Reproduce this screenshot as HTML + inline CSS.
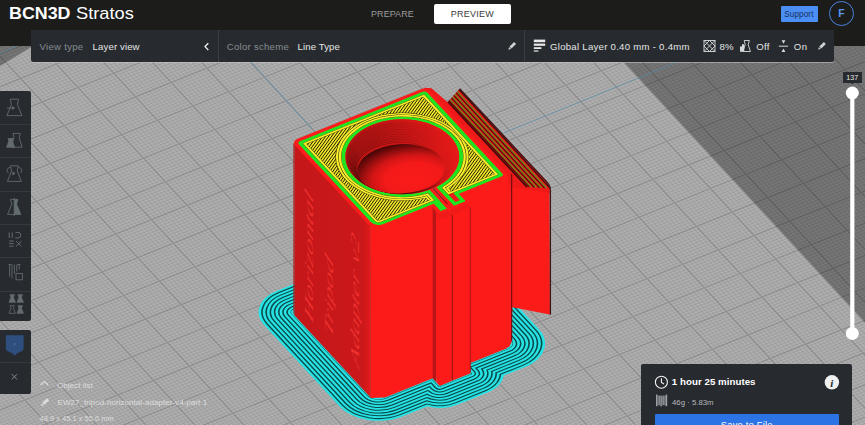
<!DOCTYPE html>
<html lang="en"><head><meta charset="utf-8"><title>BCN3D Stratos</title>
<style>
html,body{margin:0;padding:0}
html{width:865px;height:425px;overflow:hidden;background:#aeaeae}
body{width:865px;height:425px;overflow:hidden;position:relative;background:#a8a8a8;font-family:"Liberation Sans",sans-serif;color:#fff}
#app{position:absolute;left:0;top:0;width:865px;height:425px;overflow:hidden;display:block}
#scene{position:absolute;left:0;top:0}
.abs{position:absolute}
h1,button,a,label,strong{margin:0;padding:0;border:0;background:none;font:inherit;color:inherit;font-weight:normal;text-decoration:none}
button.t,h1.t,strong.t{display:block}
.t{position:absolute;white-space:nowrap;line-height:1}
#hdr{position:absolute;left:0;top:0;width:865px;height:46px;background:#1c1c1a}
#logo{left:9.2px;top:6.4px;font-size:16.6px;color:#fff;font-weight:bold;transform-origin:0 0;transform:scaleX(1.075)}
#logo2{left:76.2px;top:6.4px;font-size:16.6px;color:#fff;transform-origin:0 0;transform:scaleX(1.1)}
#prep{left:371px;top:10px;font-size:9px;color:#9c9c9a;letter-spacing:.07px}
#prevb{position:absolute;left:434px;top:4px;width:77px;height:19.5px;background:#fff;border-radius:2px}
#prev{left:450.7px;top:10px;font-size:9px;color:#3a3a3a;letter-spacing:.26px}
#sup{position:absolute;left:780.5px;top:5.5px;width:37px;height:16px;background:#4b8ff5;border-radius:1px}
#supt{left:784.2px;top:10.6px;font-size:8.2px;color:#17325c;letter-spacing:.1px}
#ava{position:absolute;left:829.3px;top:.8px;width:23px;height:23px;border:1.3px solid #4a82dc;border-radius:50%;box-sizing:content-box}
#avat{left:838.3px;top:8px;font-size:10.5px;font-weight:bold;color:#5b96ee}
#tb{position:absolute;left:31px;top:30px;width:802.5px;height:31.5px;background:#272b2f;border-radius:0 0 2px 2px;box-shadow:0 1px 0 rgba(200,200,200,.55)}
.dv{position:absolute;top:30px;width:1px;height:31.5px;background:#3a3f44}
.g{color:#868b8f}
.w{color:#e4e5e6}
.tt{font-size:9.6px;top:42.2px}
#lp1{position:absolute;left:0;top:91px;width:31px;height:230px;background:#272b2f;border-radius:0 2px 2px 0}
#lp2{position:absolute;left:0;top:329.5px;width:31px;height:64.5px;background:#272b2f;border-radius:0 2px 2px 0}
.sep{position:absolute;left:0;width:31px;height:1px;background:#34393e}
.ol{font-size:8px;color:#dedede;letter-spacing:.05px}
#rp{position:absolute;left:641px;top:364.4px;width:211px;height:70px;background:#272a2e;border-radius:2px}
#ttl{left:671.8px;top:377.4px;font-size:9.7px;font-weight:bold;color:#fff;letter-spacing:.05px}
#mat{left:672px;top:398.6px;font-size:7.8px;color:#b4b8bb}
#save{position:absolute;left:655px;top:413.5px;width:183.5px;height:30px;background:#2c73e6;border-radius:1px}
#savet{left:720.8px;top:419.6px;font-size:9.4px;color:#fff;letter-spacing:.2px}
#lbl{position:absolute;left:843px;top:71.5px;width:18.5px;height:11px;background:#272b2f}
#lblt{left:846.2px;top:73.6px;font-size:7.2px;color:#e8e8e8}
</style></head><body>
<main id="app">
<svg id="scene" width="865" height="425" viewBox="0 0 865 425">
<rect width="865" height="425" fill="#aeaeae"/>
<path d="M-348.4 97.8L240.8 733.4M-344.8 96.4L244.3 731.9M-341.2 94.9L247.9 730.5M-337.7 93.5L251.5 729.1M-334.1 92L255 727.6M-330.5 90.6L258.6 726.2M-327 89.2L262.2 724.8M-323.4 87.7L265.7 723.3M-319.8 86.3L269.3 721.9M-312.7 83.4L276.4 719M-309.1 82L280 717.6M-305.6 80.5L283.6 716.1M-302 79.1L287.1 714.7M-298.4 77.7L290.7 713.3M-294.9 76.2L294.3 711.8M-291.3 74.8L297.8 710.4M-287.8 73.4L301.4 708.9M-284.2 71.9L305 707.5M-277.1 69.1L312.1 704.6M-273.5 67.6L315.7 703.2M-269.9 66.2L319.2 701.8M-266.4 64.7L322.8 700.3M-262.8 63.3L326.4 698.9M-259.2 61.9L329.9 697.4M-255.7 60.4L333.5 696M-252.1 59L337 694.6M-248.5 57.6L340.6 693.1M-241.4 54.7L347.7 690.3M-237.8 53.2L351.3 688.8M-234.3 51.8L354.9 687.4M-230.7 50.4L358.4 686M-227.1 48.9L362 684.5M-223.6 47.5L365.6 683.1M-220 46.1L369.1 681.6M-216.4 44.6L372.7 680.2M-212.9 43.2L376.3 678.8M-205.7 40.3L383.4 675.9M-202.2 38.9L387 674.5M-198.6 37.4L390.5 673M-195 36L394.1 671.6M-191.5 34.6L397.7 670.1M-187.9 33.1L401.2 668.7M-184.3 31.7L404.8 667.3M-180.8 30.3L408.4 665.8M-177.2 28.8L411.9 664.4M-170.1 25.9L419.1 661.5M-166.5 24.5L422.6 660.1M-162.9 23.1L426.2 658.6M-159.4 21.6L429.8 657.2M-155.8 20.2L433.3 655.8M-152.2 18.8L436.9 654.3M-148.7 17.3L440.5 652.9M-145.1 15.9L444 651.5M-141.5 14.4L447.6 650M-134.4 11.6L454.7 647.2M-130.8 10.1L458.3 645.7M-127.3 8.7L461.9 644.3M-123.7 7.3L465.4 642.8M-120.1 5.8L469 641.4M-116.6 4.4L472.6 640M-113 3L476.1 638.5M-109.5 1.5L479.7 637.1M-105.9 0.1L483.3 635.7M-98.8 -2.8L490.4 632.8M-95.2 -4.2L494 631.3M-91.6 -5.7L497.5 629.9M-88.1 -7.1L501.1 628.5M-84.5 -8.5L504.7 627M-80.9 -10L508.2 625.6M-77.4 -11.4L511.8 624.2M-73.8 -12.9L515.3 622.7M-70.2 -14.3L518.9 621.3M-63.1 -17.2L526 618.4M-59.5 -18.6L529.6 617M-56 -20L533.2 615.5M-52.4 -21.5L536.7 614.1M-48.8 -22.9L540.3 612.7M-45.3 -24.4L543.9 611.2M-41.7 -25.8L547.4 609.8M-38.1 -27.2L551 608.4M-34.6 -28.7L554.6 606.9M-27.4 -31.5L561.7 604M-23.9 -33L565.3 602.6M-20.3 -34.4L568.8 601.2M-16.7 -35.8L572.4 599.7M-13.2 -37.3L576 598.3M-9.6 -38.7L579.5 596.9M-6 -40.2L583.1 595.4M-2.5 -41.6L586.7 594M1.1 -43L590.2 592.5M8.2 -45.9L597.4 589.7M11.8 -47.3L600.9 588.2M15.4 -48.8L604.5 586.8M18.9 -50.2L608.1 585.4M22.5 -51.7L611.6 583.9M26.1 -53.1L615.2 582.5M29.6 -54.5L618.8 581.1M33.2 -56L622.3 579.6M36.8 -57.4L625.9 578.2M43.9 -60.3L633 575.3M47.5 -61.7L636.6 573.9M51 -63.2L640.2 572.4M54.6 -64.6L643.7 571M58.2 -66L647.3 569.6M61.7 -67.5L650.9 568.1M65.3 -68.9L654.4 566.7M68.8 -70.3L658 565.2M72.4 -71.8L661.6 563.8M79.5 -74.6L668.7 560.9M83.1 -76.1L672.3 559.5M86.7 -77.5L675.8 558.1M90.2 -79L679.4 556.6M93.8 -80.4L683 555.2M97.4 -81.8L686.5 553.7M100.9 -83.3L690.1 552.3M104.5 -84.7L693.6 550.9M108.1 -86.1L697.2 549.4M115.2 -89L704.3 546.6M118.8 -90.5L707.9 545.1M122.3 -91.9L711.5 543.7M125.9 -93.3L715 542.3M129.5 -94.8L718.6 540.8M133 -96.2L722.2 539.4M136.6 -97.6L725.7 537.9M140.2 -99.1L729.3 536.5M143.7 -100.5L732.9 535.1M150.9 -103.4L740 532.2M154.4 -104.8L743.6 530.8M158 -106.3L747.1 529.3M161.6 -107.7L750.7 527.9M165.1 -109.1L754.3 526.4M168.7 -110.6L757.8 525M172.3 -112L761.4 523.6M175.8 -113.4L765 522.1M179.4 -114.9L768.5 520.7M186.5 -117.8L775.7 517.8M190.1 -119.2L779.2 516.4M193.7 -120.6L782.8 514.9M197.2 -122.1L786.4 513.5M200.8 -123.5L789.9 512.1M204.4 -124.9L793.5 510.6M207.9 -126.4L797.1 509.2M211.5 -127.8L800.6 507.8M215.1 -129.3L804.2 506.3M222.2 -132.1L811.3 503.5M225.8 -133.6L814.9 502M229.3 -135L818.5 500.6M232.9 -136.4L822 499.1M236.4 -137.9L825.6 497.7M240 -139.3L829.2 496.3M243.6 -140.7L832.7 494.8M247.1 -142.2L836.3 493.4M250.7 -143.6L839.9 492M257.8 -146.5L847 489.1M261.4 -147.9L850.6 487.6M265 -149.4L854.1 486.2M268.5 -150.8L857.7 484.8M272.1 -152.2L861.2 483.3M275.7 -153.7L864.8 481.9M279.2 -155.1L868.4 480.5M282.8 -156.6L871.9 479M286.4 -158L875.5 477.6M293.5 -160.9L882.6 474.7M297.1 -162.3L886.2 473.3M300.6 -163.7L889.8 471.8M304.2 -165.2L893.3 470.4M307.8 -166.6L896.9 469M311.3 -168.1L900.5 467.5M314.9 -169.5L904 466.1M318.5 -170.9L907.6 464.7M322 -172.4L911.2 463.2M329.2 -175.2L918.3 460.3M332.7 -176.7L921.9 458.9M336.3 -178.1L925.4 457.5M339.9 -179.5L929 456M343.4 -181L932.6 454.6M347 -182.4L936.1 453.2M350.6 -183.9L939.7 451.7M354.1 -185.3L943.3 450.3M357.7 -186.7L946.8 448.8M364.8 -189.6L954 446M368.4 -191L957.5 444.5M372 -192.5L961.1 443.1M375.5 -193.9L964.7 441.7M379.1 -195.4L968.2 440.2M382.7 -196.8L971.8 438.8M386.2 -198.2L975.4 437.4M389.8 -199.7L978.9 435.9M393.4 -201.1L982.5 434.5M400.5 -204L989.6 431.6M404.1 -205.4L993.2 430.2M407.6 -206.9L996.8 428.7M411.2 -208.3L1000.3 427.3M414.7 -209.7L1003.9 425.9M418.3 -211.2L1007.5 424.4M421.9 -212.6L1011 423M425.4 -214L1014.6 421.5M429 -215.5L1018.2 420.1M436.1 -218.3L1025.3 417.2M439.7 -219.8L1028.9 415.8M443.3 -221.2L1032.4 414.4M446.8 -222.7L1036 412.9M450.4 -224.1L1039.5 411.5M454 -225.5L1043.1 410M457.5 -227L1046.7 408.6M461.1 -228.4L1050.2 407.2M464.7 -229.8L1053.8 405.7M471.8 -232.7L1060.9 402.9M475.4 -234.2L1064.5 401.4M478.9 -235.6L1068.1 400M482.5 -237L1071.6 398.6M486.1 -238.5L1075.2 397.1M489.6 -239.9L1078.8 395.7M493.2 -241.3L1082.3 394.2M496.8 -242.8L1085.9 392.8M500.3 -244.2L1089.5 391.4M507.5 -247.1L1096.6 388.5M511 -248.5L1100.2 387.1M514.6 -250L1103.7 385.6M518.2 -251.4L1107.3 384.2M521.7 -252.8L1110.9 382.7M525.3 -254.3L1114.4 381.3M528.9 -255.7L1118 379.9M532.4 -257.1L1121.6 378.4M536 -258.6L1125.1 377M543.1 -261.5L1132.3 374.1M546.7 -262.9L1135.8 372.7M550.3 -264.3L1139.4 371.2M553.8 -265.8L1143 369.8M557.4 -267.2L1146.5 368.4M561 -268.6L1150.1 366.9M564.5 -270.1L1153.7 365.5M568.1 -271.5L1157.2 364.1M571.7 -273L1160.8 362.6M578.8 -275.8L1167.9 359.8M582.4 -277.3L1171.5 358.3M585.9 -278.7L1175.1 356.9M589.5 -280.1L1178.6 355.4M593 -281.6L1182.2 354M596.6 -283L1185.8 352.6M600.2 -284.4L1189.3 351.1M603.7 -285.9L1192.9 349.7M607.3 -287.3L1196.5 348.3M614.4 -290.2L1203.6 345.4M618 -291.6L1207.2 343.9M621.6 -293.1L1210.7 342.5M625.1 -294.5L1214.3 341.1M628.7 -295.9L1217.8 339.6M632.3 -297.4L1221.4 338.2M635.8 -298.8L1225 336.8M639.4 -300.3L1228.5 335.3M643 -301.7L1232.1 333.9M-349.8 101.6L648.7 -300.8M-347.6 103.9L650.9 -298.4M-345.4 106.3L653.1 -296.1M-343.2 108.6L655.3 -293.7M-341 111L657.5 -291.4M-338.8 113.4L659.6 -289M-336.7 115.7L661.8 -286.7M-334.5 118.1L664 -284.3M-332.3 120.4L666.2 -281.9M-327.9 125.1L670.5 -277.2M-325.8 127.5L672.7 -274.9M-323.6 129.8L674.9 -272.5M-321.4 132.2L677.1 -270.2M-319.2 134.5L679.3 -267.8M-317 136.9L681.5 -265.5M-314.8 139.2L683.6 -263.1M-312.7 141.6L685.8 -260.8M-310.5 144L688 -258.4M-306.1 148.7L692.4 -253.7M-303.9 151L694.5 -251.3M-301.8 153.4L696.7 -249M-299.6 155.7L698.9 -246.6M-297.4 158.1L701.1 -244.3M-295.2 160.4L703.3 -241.9M-293 162.8L705.5 -239.6M-290.8 165.1L707.6 -237.2M-288.7 167.5L709.8 -234.9M-284.3 172.2L714.2 -230.2M-282.1 174.6L716.4 -227.8M-279.9 176.9L718.5 -225.4M-277.8 179.3L720.7 -223.1M-275.6 181.6L722.9 -220.7M-273.4 184L725.1 -218.4M-271.2 186.3L727.3 -216M-269 188.7L729.5 -213.7M-266.8 191L731.6 -211.3M-262.5 195.7L736 -206.6M-260.3 198.1L738.2 -204.3M-258.1 200.5L740.4 -201.9M-255.9 202.8L742.5 -199.6M-253.7 205.2L744.7 -197.2M-251.6 207.5L746.9 -194.8M-249.4 209.9L749.1 -192.5M-247.2 212.2L751.3 -190.1M-245 214.6L753.5 -187.8M-240.7 219.3L757.8 -183.1M-238.5 221.6L760 -180.7M-236.3 224L762.2 -178.4M-234.1 226.3L764.4 -176M-231.9 228.7L766.5 -173.7M-229.7 231.1L768.7 -171.3M-227.6 233.4L770.9 -169M-225.4 235.8L773.1 -166.6M-223.2 238.1L775.3 -164.2M-218.8 242.8L779.6 -159.5M-216.7 245.2L781.8 -157.2M-214.5 247.5L784 -154.8M-212.3 249.9L786.2 -152.5M-210.1 252.2L788.4 -150.1M-207.9 254.6L790.6 -147.8M-205.7 256.9L792.7 -145.4M-203.6 259.3L794.9 -143.1M-201.4 261.7L797.1 -140.7M-197 266.4L801.5 -136M-194.8 268.7L803.6 -133.6M-192.7 271.1L805.8 -131.3M-190.5 273.4L808 -128.9M-188.3 275.8L810.2 -126.6M-186.1 278.1L812.4 -124.2M-183.9 280.5L814.6 -121.9M-181.7 282.8L816.7 -119.5M-179.6 285.2L818.9 -117.2M-175.2 289.9L823.3 -112.5M-173 292.3L825.5 -110.1M-170.8 294.6L827.6 -107.7M-168.7 297L829.8 -105.4M-166.5 299.3L832 -103M-164.3 301.7L834.2 -100.7M-162.1 304L836.4 -98.3M-159.9 306.4L838.6 -96M-157.7 308.7L840.7 -93.6M-153.4 313.4L845.1 -88.9M-151.2 315.8L847.3 -86.6M-149 318.2L849.5 -84.2M-146.8 320.5L851.6 -81.9M-144.6 322.9L853.8 -79.5M-142.5 325.2L856 -77.1M-140.3 327.6L858.2 -74.8M-138.1 329.9L860.4 -72.4M-135.9 332.3L862.6 -70.1M-131.6 337L866.9 -65.4M-129.4 339.3L869.1 -63M-127.2 341.7L871.3 -60.7M-125 344L873.5 -58.3M-122.8 346.4L875.6 -56M-120.6 348.8L877.8 -53.6M-118.5 351.1L880 -51.3M-116.3 353.5L882.2 -48.9M-114.1 355.8L884.4 -46.5M-109.7 360.5L888.7 -41.8M-107.6 362.9L890.9 -39.5M-105.4 365.2L893.1 -37.1M-103.2 367.6L895.3 -34.8M-101 369.9L897.5 -32.4M-98.8 372.3L899.7 -30.1M-96.6 374.6L901.8 -27.7M-94.5 377L904 -25.4M-92.3 379.4L906.2 -23M-87.9 384.1L910.6 -18.3M-85.7 386.4L912.7 -15.9M-83.6 388.8L914.9 -13.6M-81.4 391.1L917.1 -11.2M-79.2 393.5L919.3 -8.9M-77 395.8L921.5 -6.5M-74.8 398.2L923.7 -4.2M-72.6 400.5L925.8 -1.8M-70.5 402.9L928 0.5M-66.1 407.6L932.4 5.2M-63.9 410L934.6 7.6M-61.7 412.3L936.7 10M-59.6 414.7L938.9 12.3M-57.4 417L941.1 14.7M-55.2 419.4L943.3 17M-53 421.7L945.5 19.4M-50.8 424.1L947.7 21.7M-48.6 426.4L949.8 24.1M-44.3 431.1L954.2 28.8M-42.1 433.5L956.4 31.1M-39.9 435.9L958.6 33.5M-37.7 438.2L960.7 35.8M-35.5 440.6L962.9 38.2M-33.4 442.9L965.1 40.6M-31.2 445.3L967.3 42.9M-29 447.6L969.5 45.3M-26.8 450L971.7 47.6M-22.5 454.7L976 52.3M-20.3 457L978.2 54.7M-18.1 459.4L980.4 57M-15.9 461.7L982.6 59.4M-13.7 464.1L984.8 61.7M-11.5 466.5L986.9 64.1M-9.4 468.8L989.1 66.4M-7.2 471.2L991.3 68.8M-5 473.5L993.5 71.2M-0.6 478.2L997.8 75.9M1.5 480.6L1000 78.2M3.7 482.9L1002.2 80.6M5.9 485.3L1004.4 82.9M8.1 487.6L1006.6 85.3M10.3 490L1008.8 87.6M12.5 492.3L1010.9 90M14.6 494.7L1013.1 92.3M16.8 497.1L1015.3 94.7M21.2 501.8L1019.7 99.4M23.4 504.1L1021.8 101.8M25.5 506.5L1024 104.1M27.7 508.8L1026.2 106.5M29.9 511.2L1028.4 108.8M32.1 513.5L1030.6 111.2M34.3 515.9L1032.8 113.5M36.5 518.2L1034.9 115.9M38.6 520.6L1037.1 118.2M43 525.3L1041.5 122.9M45.2 527.7L1043.7 125.3M47.4 530L1045.8 127.7M49.5 532.4L1048 130M51.7 534.7L1050.2 132.4M53.9 537.1L1052.4 134.7M56.1 539.4L1054.6 137.1M58.3 541.8L1056.8 139.4M60.5 544.1L1058.9 141.8M64.8 548.8L1063.3 146.5M67 551.2L1065.5 148.8M69.2 553.6L1067.7 151.2M71.4 555.9L1069.8 153.5M73.6 558.3L1072 155.9M75.7 560.6L1074.2 158.3M77.9 563L1076.4 160.6M80.1 565.3L1078.6 163M82.3 567.7L1080.8 165.3M86.6 572.4L1085.1 170M88.8 574.7L1087.3 172.4M91 577.1L1089.5 174.7M93.2 579.4L1091.7 177.1M95.4 581.8L1093.8 179.4M97.6 584.2L1096 181.8M99.7 586.5L1098.2 184.1M101.9 588.9L1100.4 186.5M104.1 591.2L1102.6 188.9M108.5 595.9L1106.9 193.6M110.6 598.3L1109.1 195.9M112.8 600.6L1111.3 198.3M115 603L1113.5 200.6M117.2 605.3L1115.7 203M119.4 607.7L1117.9 205.3M121.6 610L1120 207.7M123.7 612.4L1122.2 210M125.9 614.8L1124.4 212.4M130.3 619.5L1128.8 217.1M132.5 621.8L1130.9 219.5M134.6 624.2L1133.1 221.8M136.8 626.5L1135.3 224.2M139 628.9L1137.5 226.5M141.2 631.2L1139.7 228.9M143.4 633.6L1141.9 231.2M145.6 635.9L1144 233.6M147.7 638.3L1146.2 235.9M152.1 643L1150.6 240.6M154.3 645.4L1152.8 243M156.5 647.7L1154.9 245.4M158.6 650.1L1157.1 247.7M160.8 652.4L1159.3 250.1M163 654.8L1161.5 252.4M165.2 657.1L1163.7 254.8M167.4 659.5L1165.9 257.1M169.6 661.8L1168 259.5M173.9 666.5L1172.4 264.2M176.1 668.9L1174.6 266.5M178.3 671.3L1176.8 268.9M180.5 673.6L1178.9 271.2M182.7 676L1181.1 273.6M184.8 678.3L1183.3 276M187 680.7L1185.5 278.3M189.2 683L1187.7 280.7M191.4 685.4L1189.9 283M195.7 690.1L1194.2 287.7M197.9 692.4L1196.4 290.1M200.1 694.8L1198.6 292.4M202.3 697.1L1200.8 294.8M204.5 699.5L1203 297.1M206.7 701.9L1205.1 299.5M208.8 704.2L1207.3 301.8M211 706.6L1209.5 304.2M213.2 708.9L1211.7 306.6M217.6 713.6L1216 311.3M219.7 716L1218.2 313.6M221.9 718.3L1220.4 316M224.1 720.7L1222.6 318.3M226.3 723L1224.8 320.7M228.5 725.4L1227 323M230.7 727.7L1229.1 325.4M232.8 730.1L1231.3 327.7M235 732.5L1233.5 330.1" stroke="#000" stroke-opacity=".09" stroke-width=".9" fill="none"/>
<path d="M-351.9 99.2L237.2 734.8M-316.3 84.9L272.9 720.4M-280.6 70.5L308.5 706.1M-245 56.1L344.2 691.7M-209.3 41.8L379.8 677.3M-173.6 27.4L415.5 663M-138 13L451.2 648.6M-102.3 -1.4L486.8 634.2M-66.7 -15.7L522.5 619.9M-31 -30.1L558.1 605.5M4.7 -44.5L593.8 591.1M40.3 -58.8L629.5 576.7M76 -73.2L665.1 562.4M111.6 -87.6L700.8 548M147.3 -101.9L736.4 533.6M183 -116.3L772.1 519.3M218.6 -130.7L807.8 504.9M254.3 -145.1L843.4 490.5M289.9 -159.4L879.1 476.1M325.6 -173.8L914.7 461.8M361.3 -188.2L950.4 447.4M396.9 -202.5L986.1 433M432.6 -216.9L1021.7 418.7M468.2 -231.3L1057.4 404.3M503.9 -245.6L1093 389.9M539.6 -260L1128.7 375.6M575.2 -274.4L1164.4 361.2M610.9 -288.8L1200 346.8M646.5 -303.1L1235.7 332.5M-351.9 99.2L646.5 -303.1M-330.1 122.8L668.4 -279.6M-308.3 146.3L690.2 -256M-286.5 169.8L712 -232.5M-264.7 193.4L733.8 -209M-242.8 216.9L755.6 -185.4M-221 240.5L777.5 -161.9M-199.2 264L799.3 -138.3M-177.4 287.5L821.1 -114.8M-155.6 311.1L842.9 -91.3M-133.7 334.6L864.7 -67.7M-111.9 358.2L886.6 -44.2M-90.1 381.7L908.4 -20.6M-68.3 405.2L930.2 2.9M-46.5 428.8L952 26.4M-24.6 452.3L973.8 50M-2.8 475.9L995.7 73.5M19 499.4L1017.5 97.1M40.8 522.9L1039.3 120.6M62.6 546.5L1061.1 144.1M84.5 570L1082.9 167.7M106.3 593.6L1104.8 191.2M128.1 617.1L1126.6 214.8M149.9 640.6L1148.4 238.3M171.7 664.2L1170.2 261.8M193.6 687.7L1192 285.4M215.4 711.3L1213.9 308.9M237.2 734.8L1235.7 332.5" stroke="#000" stroke-opacity=".17" stroke-width="1.3" fill="none"/>
<path d="M230.6 -361.9L1038.0 509.1L1400 509.1L1400 -361.9z" fill="#000" fill-opacity=".32"/>
<path d="M0 46H33L0 66z" fill="#000" fill-opacity=".32"/>
<path d="M503.6 133L700 52.9" stroke="#4f8aa6" stroke-opacity=".8" stroke-width=".8" fill="none"/>
<path d="M240 49.8L312 129" stroke="#6a93aa" stroke-opacity=".8" stroke-width="1.1" fill="none"/>
<path d="M0 54L17 46" stroke="#4f8aa6" stroke-opacity=".7" stroke-width=".8" fill="none"/>
<defs><pattern id="hatch" width="2.4" height="6" patternUnits="userSpaceOnUse" patternTransform="rotate(36)"><rect width="2.4" height="6" fill="#f8ee2c"/><rect width="0.86" height="6" fill="#1e1b02"/></pattern><clipPath id="holeclip"><circle cx="19.55" cy="18.35" r="13.60" transform="matrix(3.5660 -1.4370 2.1820 2.3540 292.50 141.70)"/></clipPath><clipPath id="hatchA"><path d="M2.57 2.52H35.03A0.05 0.05 0 0 1 35.08 2.57V35.03A0.05 0.05 0 0 1 35.03 35.08H3.00A0.48 0.48 0 0 1 2.52 34.60V2.57A0.05 0.05 0 0 1 2.57 2.52z" transform="matrix(3.5660 -1.4370 2.1820 2.3540 292.50 141.70)"/></clipPath><clipPath id="hatchclip" clip-path="url(#hatchA)"><path clip-rule="evenodd" d="M-20 -20H80V80H-20zM23.18 70V33.91A15.98 15.98 0 1 0 16.52 34.04V70z" transform="matrix(3.5660 -1.4370 2.1820 2.3540 292.50 141.70)"/></clipPath><linearGradient id="faceL" x1="0" y1="0" x2="1" y2="0"><stop offset="0" stop-color="#c4171a"/><stop offset=".9" stop-color="#cb181a"/><stop offset="1" stop-color="#e41a1a"/></linearGradient><radialGradient id="inner" cx=".64" cy=".72" r=".78"><stop offset="0" stop-color="#fa1b1a"/><stop offset=".42" stop-color="#f41a19"/><stop offset=".62" stop-color="#d01515"/><stop offset=".8" stop-color="#8a0d0d"/><stop offset=".95" stop-color="#480606"/></radialGradient><linearGradient id="ringg" gradientUnits="userSpaceOnUse" x1="338" y1="120" x2="468" y2="175"><stop offset="0" stop-color="#2a0404" stop-opacity=".85"/><stop offset=".45" stop-color="#2a0404" stop-opacity=".5"/><stop offset="1" stop-color="#2a0404" stop-opacity=".06"/></linearGradient><linearGradient id="coneg" gradientUnits="userSpaceOnUse" x1="338" y1="125" x2="468" y2="180"><stop offset="0" stop-color="#3a0505" stop-opacity=".42"/><stop offset=".5" stop-color="#3a0505" stop-opacity=".16"/><stop offset="1" stop-color="#3a0505" stop-opacity="0"/></linearGradient></defs><g transform="matrix(3.5660 -1.4370 2.1820 2.3540 292.50 313.30)" fill="none" stroke-linejoin="round"><path d="M1.00 -0.90H37.80A1.50 1.50 0 0 1 39.30 0.60V35.60A2.00 2.00 0 0 1 37.30 37.60H24.90V40.80H16.30V37.60H3.00A3.00 3.00 0 0 1 0 34.60V0.10A1.00 1.00 0 0 1 1.00 -0.90z" stroke="#27e3e3" stroke-width="16.00"/><path d="M1.00 -0.90H37.80A1.50 1.50 0 0 1 39.30 0.60V35.60A2.00 2.00 0 0 1 37.30 37.60H24.90V40.80H16.30V37.60H3.00A3.00 3.00 0 0 1 0 34.60V0.10A1.00 1.00 0 0 1 1.00 -0.90z" stroke="#0b4a4c" stroke-width="14.76"/><path d="M1.00 -0.90H37.80A1.50 1.50 0 0 1 39.30 0.60V35.60A2.00 2.00 0 0 1 37.30 37.60H24.90V40.80H16.30V37.60H3.00A3.00 3.00 0 0 1 0 34.60V0.10A1.00 1.00 0 0 1 1.00 -0.90z" stroke="#27e3e3" stroke-width="14.00"/><path d="M1.00 -0.90H37.80A1.50 1.50 0 0 1 39.30 0.60V35.60A2.00 2.00 0 0 1 37.30 37.60H24.90V40.80H16.30V37.60H3.00A3.00 3.00 0 0 1 0 34.60V0.10A1.00 1.00 0 0 1 1.00 -0.90z" stroke="#0b4a4c" stroke-width="12.76"/><path d="M1.00 -0.90H37.80A1.50 1.50 0 0 1 39.30 0.60V35.60A2.00 2.00 0 0 1 37.30 37.60H24.90V40.80H16.30V37.60H3.00A3.00 3.00 0 0 1 0 34.60V0.10A1.00 1.00 0 0 1 1.00 -0.90z" stroke="#27e3e3" stroke-width="12.00"/><path d="M1.00 -0.90H37.80A1.50 1.50 0 0 1 39.30 0.60V35.60A2.00 2.00 0 0 1 37.30 37.60H24.90V40.80H16.30V37.60H3.00A3.00 3.00 0 0 1 0 34.60V0.10A1.00 1.00 0 0 1 1.00 -0.90z" stroke="#0b4a4c" stroke-width="10.76"/><path d="M1.00 -0.90H37.80A1.50 1.50 0 0 1 39.30 0.60V35.60A2.00 2.00 0 0 1 37.30 37.60H24.90V40.80H16.30V37.60H3.00A3.00 3.00 0 0 1 0 34.60V0.10A1.00 1.00 0 0 1 1.00 -0.90z" stroke="#27e3e3" stroke-width="10.00"/><path d="M1.00 -0.90H37.80A1.50 1.50 0 0 1 39.30 0.60V35.60A2.00 2.00 0 0 1 37.30 37.60H24.90V40.80H16.30V37.60H3.00A3.00 3.00 0 0 1 0 34.60V0.10A1.00 1.00 0 0 1 1.00 -0.90z" stroke="#0b4a4c" stroke-width="8.76"/><path d="M1.00 -0.90H37.80A1.50 1.50 0 0 1 39.30 0.60V35.60A2.00 2.00 0 0 1 37.30 37.60H24.90V40.80H16.30V37.60H3.00A3.00 3.00 0 0 1 0 34.60V0.10A1.00 1.00 0 0 1 1.00 -0.90z" stroke="#27e3e3" stroke-width="8.00"/><path d="M1.00 -0.90H37.80A1.50 1.50 0 0 1 39.30 0.60V35.60A2.00 2.00 0 0 1 37.30 37.60H24.90V40.80H16.30V37.60H3.00A3.00 3.00 0 0 1 0 34.60V0.10A1.00 1.00 0 0 1 1.00 -0.90z" stroke="#0b4a4c" stroke-width="6.76"/><path d="M1.00 -0.90H37.80A1.50 1.50 0 0 1 39.30 0.60V35.60A2.00 2.00 0 0 1 37.30 37.60H24.90V40.80H16.30V37.60H3.00A3.00 3.00 0 0 1 0 34.60V0.10A1.00 1.00 0 0 1 1.00 -0.90z" stroke="#27e3e3" stroke-width="6.00"/><path d="M1.00 -0.90H37.80A1.50 1.50 0 0 1 39.30 0.60V35.60A2.00 2.00 0 0 1 37.30 37.60H24.90V40.80H16.30V37.60H3.00A3.00 3.00 0 0 1 0 34.60V0.10A1.00 1.00 0 0 1 1.00 -0.90z" stroke="#0b4a4c" stroke-width="4.76"/><path d="M1.00 -0.90H37.80A1.50 1.50 0 0 1 39.30 0.60V35.60A2.00 2.00 0 0 1 37.30 37.60H24.90V40.80H16.30V37.60H3.00A3.00 3.00 0 0 1 0 34.60V0.10A1.00 1.00 0 0 1 1.00 -0.90z" stroke="#27e3e3" stroke-width="4.00"/><path d="M1.00 -0.90H37.80A1.50 1.50 0 0 1 39.30 0.60V35.60A2.00 2.00 0 0 1 37.30 37.60H24.90V40.80H16.30V37.60H3.00A3.00 3.00 0 0 1 0 34.60V0.10A1.00 1.00 0 0 1 1.00 -0.90z" stroke="#0b4a4c" stroke-width="2.76"/><path d="M1.00 -0.90H37.80A1.50 1.50 0 0 1 39.30 0.60V35.60A2.00 2.00 0 0 1 37.30 37.60H24.90V40.80H16.30V37.60H3.00A3.00 3.00 0 0 1 0 34.60V0.10A1.00 1.00 0 0 1 1.00 -0.90z" stroke="#27e3e3" stroke-width="2.00"/><path d="M1.00 -0.90H37.80A1.50 1.50 0 0 1 39.30 0.60V35.60A2.00 2.00 0 0 1 37.30 37.60H24.90V40.80H16.30V37.60H3.00A3.00 3.00 0 0 1 0 34.60V0.10A1.00 1.00 0 0 1 1.00 -0.90z" stroke="#0b4a4c" stroke-width="0.76"/><path d="M1.00 -0.90H37.80A1.50 1.50 0 0 1 39.30 0.60V35.60A2.00 2.00 0 0 1 37.30 37.60H24.90V40.80H16.30V37.60H3.00A3.00 3.00 0 0 1 0 34.60V0.10A1.00 1.00 0 0 1 1.00 -0.90z" stroke="#27e3e3" stroke-width="0.50" fill="#27e3e3"/></g><path d="M505 174L549.5 186L549.9 314.6L512.4 307.2L511 340L505 340z" fill="#fb1b19" /><path d="M422.5 90L425 87.7L431.5 88.3L447.6 102.2L459.4 89.1L546.6 181.6L549.8 187L549.8 193L512 187L504 176.5z" fill="#ee1a1a" /><path d="M458.9 89.6L550.5 188.4" stroke="#4a1010" stroke-width="1.5" fill="none"/><path d="M457 91.7L546.5 188.2" stroke="#5a9a1c" stroke-width="1.15" fill="none"/><path d="M456.2 92.7L544.6 188.1" stroke="#5c0b0b" stroke-width="1.25" fill="none"/><path d="M454.7 94.3L541.4 187.9" stroke="#5a9a1c" stroke-width="1.15" fill="none"/><path d="M453.8 95.3L539.5 187.8" stroke="#5c0b0b" stroke-width="1.25" fill="none"/><path d="M452.3 97L536.3 187.6" stroke="#5a9a1c" stroke-width="1.15" fill="none"/><path d="M451.4 97.9L534.4 187.5" stroke="#5c0b0b" stroke-width="1.25" fill="none"/><path d="M450 99.6L531.3 187.3" stroke="#5a9a1c" stroke-width="1.15" fill="none"/><path d="M449.1 100.6L529.4 187.2" stroke="#5c0b0b" stroke-width="1.25" fill="none"/><path d="M448 101.7L527.1 187.1" stroke="#4a0a0a" stroke-width="1.8" fill="none"/><path d="M459.6 88.8L546.6 181.6Q550.4 185.8 550.4 191V314.8" stroke="#3e1516" stroke-width="1.3" fill="none"/><path d="M294.5 315.4L370.9 397.9L370.9 224.8L294.5 142.3z" fill="url(#faceL)" /><path d="M370.9 397.9L385.2 397.5L506.5 348.6L507.5 343.4L507.5 170.2L506.5 175.5L385.2 224.3L370.9 224.8z" fill="#fd1b19" /><path d="M294.5 315.4L293.4 312.9L293.4 143.2L294.5 144.4z" fill="#a81416" /><path d="M445.9 373.1L449.4 376.8L449.4 208L445.9 201.5z" fill="#b81517" /><path d="M449.4 376.8L452.8 380.6L470.3 373.6L470.3 207.6L452.8 214.6L449.4 208z" fill="#fd1b19" /><path d="M445.9 201.5L463.3 194.4L470.3 207.6L452.8 214.6z" fill="#f01a1a" /><path d="M432.7 378.4L436.2 382.2L436.2 213.4L432.7 206.8z" fill="#b81517" /><path d="M436.2 382.2L439.7 385.9L451.8 381L451.8 215.1L439.7 219.9L436.2 213.4z" fill="#fd1b19" /><path d="M432.7 206.8L444.8 201.9L451.8 215.1L439.7 219.9z" fill="#f01a1a" /><path d="M452.3 380.8L452.3 214.8" stroke="#9a1214" stroke-width="1.1"/><path d="M470.3 372.6L470.3 207.6" stroke="#b01517" stroke-width="1"/><path d="M505 335L511.9 335L511.9 341.5L509.5 346.5L505 349z" fill="#fd1b19" /><path d="M511.6 174V341" stroke="#7c0e12" stroke-width="1.3"/><g transform="matrix(3.5660 -1.4370 2.1820 2.3540 292.50 141.70)"><path d="M1.60 0.00H36.00A1.60 1.60 0 0 1 37.60 1.60V36.00A1.60 1.60 0 0 1 36.00 37.60H3.00A3.00 3.00 0 0 1 0.00 34.60V1.60A1.60 1.60 0 0 1 1.60 0.00z" fill="none" stroke="#fb1b19" stroke-width=".5"/><clipPath id="lv1"><path d="M1.60 0.00H36.00A1.60 1.60 0 0 1 37.60 1.60V36.00A1.60 1.60 0 0 1 36.00 37.60H3.00A3.00 3.00 0 0 1 0.00 34.60V1.60A1.60 1.60 0 0 1 1.60 0.00z"/><rect x="16.30" y="37.10" width="3.40" height="3.70"/><rect x="20.00" y="37.10" width="4.90" height="3.70"/></clipPath><path clip-path="url(#lv1)" fill-rule="evenodd" fill="#ff1d1b" d="M-20 -20H80V80H-20zM20.00 70V31.14A12.80 12.80 0 1 0 19.70 31.15V70z"/><rect x="19.70" y="30.85" width="0.30" height="7.65" fill="#8a0f10"/><clipPath id="lv2"><path d="M1.60 0.80H36.00A0.80 0.80 0 0 1 36.80 1.60V36.00A0.80 0.80 0 0 1 36.00 36.80H3.00A2.20 2.20 0 0 1 0.80 34.60V1.60A0.80 0.80 0 0 1 1.60 0.80z"/><rect x="17.10" y="36.30" width="1.80" height="3.70"/><rect x="20.80" y="36.30" width="3.30" height="3.70"/></clipPath><path clip-path="url(#lv2)" fill-rule="evenodd" fill="#20e41e" d="M-20 -20H80V80H-20zM20.80 70V31.89A13.60 13.60 0 1 0 18.90 31.93V70z"/><clipPath id="lv3"><path d="M1.85 1.80H35.75A0.05 0.05 0 0 1 35.80 1.85V35.75A0.05 0.05 0 0 1 35.75 35.80H3.00A1.20 1.20 0 0 1 1.80 34.60V1.85A0.05 0.05 0 0 1 1.85 1.80z"/><rect x="21.80" y="35.30" width="1.30" height="3.70"/></clipPath><path clip-path="url(#lv3)" fill-rule="evenodd" fill="#ef1a1a" d="M-20 -20H80V80H-20zM21.80 70V32.78A14.60 14.60 0 1 0 17.90 32.86V70z"/><clipPath id="lv4"><path d="M1.83 1.78H35.77A0.05 0.05 0 0 1 35.82 1.83V35.77A0.05 0.05 0 0 1 35.77 35.82H3.00A1.22 1.22 0 0 1 1.78 34.60V1.83A0.05 0.05 0 0 1 1.83 1.78z"/></clipPath><path clip-path="url(#lv4)" fill-rule="evenodd" fill="#46600a" d="M-20 -20H80V80H-20zM21.78 70V32.76A14.58 14.58 0 1 0 17.92 32.84V70z"/><clipPath id="lv5"><path d="M1.90 1.85H35.70A0.05 0.05 0 0 1 35.75 1.90V35.70A0.05 0.05 0 0 1 35.70 35.75H3.00A1.15 1.15 0 0 1 1.85 34.60V1.90A0.05 0.05 0 0 1 1.90 1.85z"/></clipPath><path clip-path="url(#lv5)" fill-rule="evenodd" fill="#f8ee2c" d="M-20 -20H80V80H-20zM21.85 70V32.82A14.65 14.65 0 1 0 17.85 32.90V70z"/><clipPath id="lv6"><path d="M2.45 2.40H35.15A0.05 0.05 0 0 1 35.20 2.45V35.15A0.05 0.05 0 0 1 35.15 35.20H3.00A0.60 0.60 0 0 1 2.40 34.60V2.45A0.05 0.05 0 0 1 2.45 2.40z"/></clipPath><path clip-path="url(#lv6)" fill-rule="evenodd" fill="#332f05" d="M-20 -20H80V80H-20zM22.40 70V33.28A15.20 15.20 0 1 0 17.30 33.38V70z"/><clipPath id="lv7"><path d="M2.57 2.52H35.03A0.05 0.05 0 0 1 35.08 2.57V35.03A0.05 0.05 0 0 1 35.03 35.08H3.00A0.48 0.48 0 0 1 2.52 34.60V2.57A0.05 0.05 0 0 1 2.57 2.52z"/></clipPath><path clip-path="url(#lv7)" fill-rule="evenodd" fill="#f8ee2c" d="M-20 -20H80V80H-20zM22.54 70V33.40A15.34 15.34 0 1 0 17.16 33.50V70z"/><clipPath id="lv8"><path d="M2.57 2.52H35.03A0.05 0.05 0 0 1 35.08 2.57V35.03A0.05 0.05 0 0 1 35.03 35.08H3.00A0.48 0.48 0 0 1 2.52 34.60V2.57A0.05 0.05 0 0 1 2.57 2.52z"/></clipPath><path clip-path="url(#lv8)" fill-rule="evenodd" fill="#332f05" d="M-20 -20H80V80H-20zM23.06 70V33.82A15.86 15.86 0 1 0 16.64 33.94V70z"/></g><rect x="290" y="85" width="230" height="150" fill="url(#hatch)" clip-path="url(#hatchclip)"/><g clip-path="url(#holeclip)"><rect x="330" y="100" width="150" height="110" fill="#f61b1a"/><rect x="330" y="100" width="150" height="110" fill="url(#coneg)"/><ellipse cx="402.1" cy="158.4" rx="55.1" ry="35.8" fill="none" stroke="url(#ringg)" stroke-opacity="0.44" stroke-width=".65"/><ellipse cx="402" cy="159.2" rx="54.2" ry="34.9" fill="none" stroke="url(#ringg)" stroke-opacity="0.48" stroke-width=".65"/><ellipse cx="401.9" cy="160" rx="53.3" ry="34.1" fill="none" stroke="url(#ringg)" stroke-opacity="0.52" stroke-width=".65"/><ellipse cx="401.8" cy="160.8" rx="52.4" ry="33.2" fill="none" stroke="url(#ringg)" stroke-opacity="0.57" stroke-width=".65"/><ellipse cx="401.7" cy="161.6" rx="51.5" ry="32.3" fill="none" stroke="url(#ringg)" stroke-opacity="0.61" stroke-width=".65"/><ellipse cx="401.6" cy="162.4" rx="50.6" ry="31.5" fill="none" stroke="url(#ringg)" stroke-opacity="0.65" stroke-width=".65"/><ellipse cx="401.5" cy="163.2" rx="49.7" ry="30.6" fill="none" stroke="url(#ringg)" stroke-opacity="0.70" stroke-width=".65"/><ellipse cx="401.4" cy="164" rx="48.8" ry="29.8" fill="none" stroke="url(#ringg)" stroke-opacity="0.74" stroke-width=".65"/><ellipse cx="401.3" cy="164.8" rx="47.9" ry="28.9" fill="none" stroke="url(#ringg)" stroke-opacity="0.78" stroke-width=".65"/><ellipse cx="401.2" cy="165.6" rx="47.1" ry="28" fill="none" stroke="url(#ringg)" stroke-opacity="0.83" stroke-width=".65"/><ellipse cx="401.1" cy="166.4" rx="46.2" ry="27.2" fill="none" stroke="url(#ringg)" stroke-opacity="0.87" stroke-width=".65"/><ellipse cx="401" cy="167.2" rx="45.3" ry="26.3" fill="none" stroke="url(#ringg)" stroke-opacity="0.91" stroke-width=".65"/><ellipse cx="400.9" cy="168" rx="44.4" ry="25.5" fill="none" stroke="url(#ringg)" stroke-opacity="0.96" stroke-width=".65"/><ellipse cx="400.8" cy="168.8" rx="43.5" ry="24.6" fill="url(#inner)" transform="rotate(-4 400.8 168.8)"/></g><text transform="matrix(0 -2.964 1.222 1.318 313.2 324.4)" font-family="'Liberation Serif',serif" font-style="italic" font-size="10" fill="#ff3835" fill-opacity=".78" stroke="#8e1010" stroke-opacity=".3" stroke-width=".3" paint-order="stroke">Horizontal</text><text transform="matrix(0 -2.964 1.222 1.318 333.3 339.8)" font-family="'Liberation Serif',serif" font-style="italic" font-size="10" fill="#ff3835" fill-opacity=".78" stroke="#8e1010" stroke-opacity=".3" stroke-width=".3" paint-order="stroke">Tripod</text><text transform="matrix(0 -2.964 1.222 1.318 359.3 369.7)" font-family="'Liberation Serif',serif" font-style="italic" font-size="10" fill="#ff3835" fill-opacity=".78" stroke="#8e1010" stroke-opacity=".3" stroke-width=".3" paint-order="stroke">Adapter v2</text>
</svg>
<header>
<div id="hdr"></div>
<h1 class="t" id="logo">BCN3D</h1><span class="t" id="logo2">Stratos</span>
<nav><a class="t" id="prep">PREPARE</a><span id="prevb"></span><a class="t" id="prev">PREVIEW</a></nav>
<span id="sup"></span><button class="t" id="supt">Support</button><span id="ava"></span><span class="t" id="avat">F</span>
</header>
<section aria-label="Stage menu">
<div id="tb"></div><div class="dv" style="left:218px"></div><div class="dv" style="left:524px"></div>
<label class="t tt g" style="left:39.5px;letter-spacing:.28px">View type</label><span class="t tt w" style="left:92.6px;letter-spacing:.12px">Layer view</span>
<label class="t tt g" style="left:226.8px;letter-spacing:.25px">Color scheme</label><span class="t tt w" style="left:297.5px;letter-spacing:.12px">Line Type</span>
<span class="t tt w" style="left:550px;letter-spacing:.27px">Global Layer 0.40 mm - 0.4mm</span>
<span class="t tt w" style="left:719.6px">8%</span><span class="t tt w" style="left:756.3px;letter-spacing:.3px">Off</span><span class="t tt w" style="left:793.8px;letter-spacing:.5px">On</span>
</section>
<aside aria-label="Tools">
<div id="lp1"></div>
<div class="sep" style="top:124px"></div>
<div class="sep" style="top:157.3px"></div>
<div class="sep" style="top:190.6px"></div>
<div class="sep" style="top:224px"></div>
<div class="sep" style="top:257.3px"></div>
<div class="sep" style="top:290.6px"></div>
<div id="lp2"></div><div class="sep" style="top:362px"></div>
</aside>
<section aria-label="Object list">
<span class="t ol" style="left:57px;top:381.5px">Object list</span>
<span class="t ol" style="left:57.5px;top:398.6px">EW27_tripod-horizontal-adapter-v4-part 1</span>
<span class="t ol" style="left:39.5px;top:415px;font-size:7.5px;letter-spacing:0">48.9 x 45.1 x 55.0 mm</span>
</section>
<section aria-label="Print job">
<div id="rp"></div><strong class="t" id="ttl">1 hour 25 minutes</strong><span class="t" id="mat">46g · 5.83m</span>
<span id="save"></span><button class="t" id="savet">Save to File</button>
</section>
<div id="lbl"></div><span class="t" id="lblt">137</span>
<svg class="abs" style="left:0;top:0" width="865" height="425" viewBox="0 0 865 425"><path d="M208.3 43.2L205 46.6L208.3 50" fill="none" stroke="#f0f0f0" stroke-width="1.3"/><g transform="translate(511.8 46.3) rotate(45)"><rect x="-1.4" y="-4.6" width="2.8" height="6.4" fill="#cfd1d3"/><path d="M-1.4 2.4h2.8L0 4.8z" fill="#cfd1d3"/></g><g transform="translate(821.6 46.2) rotate(45)"><rect x="-1.4" y="-4.6" width="2.8" height="6.4" fill="#cfd1d3"/><path d="M-1.4 2.4h2.8L0 4.8z" fill="#cfd1d3"/></g><g fill="#e8e9ea"><rect x="533.8" y="39.6" width="11.4" height="2.6"/><rect x="533.8" y="43.6" width="11.4" height="2.2"/><rect x="533.8" y="47.2" width="7.6" height="1.8"/><rect x="533.8" y="50.4" width="4.6" height="1.2"/></g><g fill="none" stroke="#d8dadb" stroke-width=".9"><rect x="704" y="40.5" width="11" height="11"/><path d="M704 46l5.5-5.5l5.5 5.5l-5.5 5.5zM704 40.5l11 11M715 40.5l-11 11"/></g><g><path d="M744.2 40.5h5.2l-1.2 4.2l2.2 6.8h-7.4l2.2-6.8z" fill="none" stroke="#d8dadb" stroke-width=".9"/><path d="M740 51.8v-5.4h2v-2.2h2.2v7.6z" fill="#d8dadb"/></g><g stroke="#d8dadb" stroke-width="1" fill="#d8dadb"><path d="M778.8 46.2h9.4" /><path d="M781.6 40.3h3.8l-1.9 3.4z" stroke="none"/><path d="M781.6 52h3.8l-1.9-3.4z" stroke="none"/></g><path d="M10.2 99.2H18.6L17.4 104.6L21.9 115.6H6.9L11.4 104.6z" fill="none" stroke="#636a70" stroke-width="0.9" stroke-linejoin="round"/><path d="M7 108h6" stroke="#636a70" stroke-width=".9"/><path d="M12.2 106l3 2l-3 2z" fill="#636a70"/><path d="M13.0 133.4H20.2L19.2 138.0L22.2 147.2H11.0L14.0 138.0z" fill="none" stroke="#636a70" stroke-width="0.9" stroke-linejoin="round"/><path d="M8.2 138.6H13.0L12.4 141.4L14.6 147.2H6.6L8.8 141.4z" fill="#636a70" stroke="#636a70" stroke-width="0.9" stroke-linejoin="round"/><path d="M10.4 165.8H18.4L17.2 170.9L21.4 181.4H7.4L11.6 170.9z" fill="none" stroke="#636a70" stroke-width="0.9" stroke-linejoin="round"/><path d="M10 167.4a3.2 3.2 0 0 0 -1.6 5.8M18.8 167.4a3.2 3.2 0 0 1 1.6 5.8" fill="none" stroke="#636a70" stroke-width=".9"/><path d="M12.4 171.6l3.2 1.9l-3.2 1.9z" fill="#636a70"/><path d="M10.6 199.4H17.8L16.6 204.3L20.8 214.4H7.6L11.8 204.3z" fill="none" stroke="#636a70" stroke-width="0.9" stroke-linejoin="round"/><path d="M14.2 199.4h3.6l-1.2 5l4.2 10H14.2z" fill="#636a70"/><path d="M14.2 197.8v18.4" stroke="#636a70" stroke-width=".9"/><g fill="none" stroke="#636a70" stroke-width="1"><path d="M9.2 232.4v5.6M12.2 232.4v5.6M15.4 232.4h2.6a2.8 2.8 0 0 1 0 5.6h-2.6M9.2 241h4.4M9.2 243.6h4.4M9.2 246.2h4.4M16 241l5.6 5.4M21.6 241l-5.6 5.4"/></g><g fill="none" stroke="#636a70" stroke-width=".9"><path d="M9.6 264.5v12M12 264.5v14M14.4 264.5v9M16.8 264.5v7M19.2 264.5v5M8.6 264.5h3M17.4 264.5h3"/><rect x="16" y="273.4" width="6.4" height="6.4"/></g><path d="M10.0 294.7h4.4l-1 2.6l2 5h-6.4l2-5z" fill="#636a70" stroke="#636a70" stroke-width=".8"/><path d="M18.0 294.7h4.4l-1 2.6l2 5h-6.4l2-5z" fill="#636a70" stroke="#636a70" stroke-width=".8"/><path d="M10.0 305.7h4.4l-1 2.6l2 5h-6.4l2-5z" fill="none" stroke="#636a70" stroke-width=".8"/><path d="M18.0 305.7h4.4l-1 2.6l2 5h-6.4l2-5z" fill="#636a70" stroke="#636a70" stroke-width=".8"/><path d="M5.8 335.2h17.8v13.2q0 2-2 2.8l-4.6 2l-2.3 2.6l-2.3-2.6l-4.6-2q-2-.8-2-2.8z" fill="#2e4e7e"/><path d="M14.6 343v2.6" stroke="#4f74ac" stroke-width="1.1"/><path d="M11.8 374.2l5.2 5.2M17 374.2l-5.2 5.2" stroke="#83888c" stroke-width="1"/><path d="M40.6 385l3.8-3.6l3.8 3.6" fill="none" stroke="#e2e2e2" stroke-width="1.1"/><g transform="translate(44.6 402.6) rotate(45)"><rect x="-1.5" y="-5" width="3" height="7" fill="#dcdcdc"/><path d="M-1.5 2.6h3L0 5.2z" fill="#dcdcdc"/></g><rect x="850.2" y="93" width="4.2" height="240" fill="#fff"/><circle cx="852.3" cy="93" r="6.5" fill="#fff"/><circle cx="852.3" cy="333.5" r="6.5" fill="#fff"/><path d="M850.3 82.4h4l-2 2.2z" fill="#272b2f"/><circle cx="661.4" cy="382.2" r="6" fill="none" stroke="#f2f2f2" stroke-width="1.1"/><path d="M661.4 378.2v4.2l2.6 1.6" fill="none" stroke="#f2f2f2" stroke-width="1.1"/><circle cx="831.9" cy="382.3" r="7.2" fill="#f0f0f0"/><g fill="#9ea2a6"><rect x="656" y="394.6" width="1.6" height="11.6"/><rect x="658.4" y="395.6" width="1.4" height="9.6"/><rect x="660.4" y="395.6" width="1.4" height="10.8"/><rect x="662.4" y="395.6" width="1.4" height="9.6"/><rect x="664.4" y="395.6" width="1" height="9.6"/><rect x="665.6" y="394.6" width="1.6" height="11.6"/></g></svg>
<span class="t" style="left:830.2px;top:377.6px;font-family:'Liberation Serif',serif;font-weight:bold;font-style:italic;font-size:11px;color:#25282c">i</span>
</main>
</body></html>
